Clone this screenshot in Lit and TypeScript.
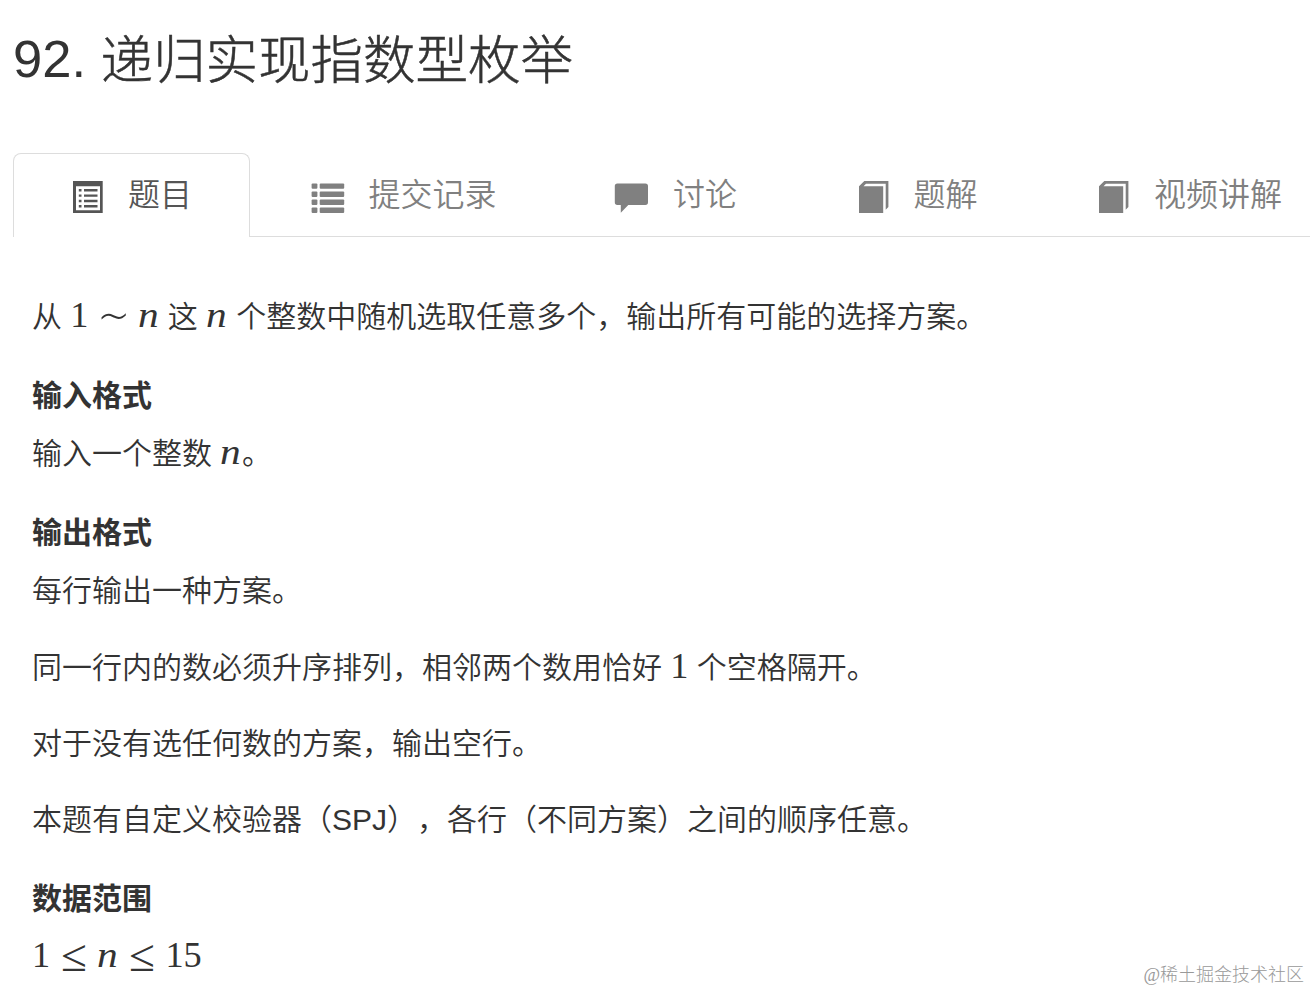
import { LitElement, html, css } from 'lit';
import { customElement } from 'lit/decorators.js';

const listAlt = html`
  <svg class="icon" viewBox="0 0 32 32">
    <path fill-rule="evenodd" d="M2 0H31.7V32H2ZM5 5.3V29.3H29V5.3Z"></path>
    <path d="M7.8 8h2.7v2.4H7.8zM13 8h13.5v2.4H13zM7.8 13.4h2.7v2.4H7.8zM13 13.4h13.5v2.4H13zM7.8 18.8h2.7v2.4H7.8zM13 18.8h13.5v2.4H13zM7.8 24.1h2.7v2.4H7.8zM13 24.1h13.5v2.4H13z"></path>
  </svg>
`;

const list = html`
  <svg class="icon" viewBox="0 0 32 32">
    <rect x="-0.4" y="2.5" width="5.8" height="5.3" rx="1"></rect>
    <rect x="7.7" y="2.5" width="24.5" height="5.3" rx="1"></rect>
    <rect x="-0.4" y="10.6" width="5.8" height="5.3" rx="1"></rect>
    <rect x="7.7" y="10.6" width="24.5" height="5.3" rx="1"></rect>
    <rect x="-0.4" y="18.6" width="5.8" height="5.3" rx="1"></rect>
    <rect x="7.7" y="18.6" width="24.5" height="5.3" rx="1"></rect>
    <rect x="-0.4" y="26.6" width="5.8" height="5.3" rx="1"></rect>
    <rect x="7.7" y="26.6" width="24.5" height="5.3" rx="1"></rect>
  </svg>
`;

const comment = html`
  <svg class="icon" viewBox="0 0 32 32">
    <path d="M1.4 2.5H29.4a2.6 2.6 0 0 1 2.6 2.6V21.3a2.6 2.6 0 0 1-2.6 2.6H12.3L4.8 31.8V23.9H1.4a2.6 2.6 0 0 1-2.6-2.6V5.1A2.6 2.6 0 0 1 1.4 2.5Z"></path>
  </svg>
`;

const book = html`
  <svg class="icon" viewBox="0 0 32 32">
    <path d="M2 5.3 7.3 0H31.4V26L28.7 28.8V2.7H9L6.5 5.3H26.2V32H2Z"></path>
  </svg>
`;

@customElement('app-root')
export class AppRoot extends LitElement {
  static styles = css`
    :host {
      display: block;
      width: 1310px;
      height: 991px;
      overflow: hidden;
      position: relative;
      background: #fff;
      color: #333;
      font-family: "Liberation Sans", "Noto Sans CJK SC", sans-serif;
      text-spacing-trim: space-all;
    }

    h1 {
      margin: 0;
      padding: 24px 0 0 13px;
      height: 153px;
      box-sizing: border-box;
      font-size: 52.5px;
      line-height: 70px;
      font-weight: 300;
      white-space: nowrap;
    }

    .zh {
      display: inline-block;
      transform: translateY(2px);
      -webkit-text-stroke: 0.5px #333;
    }

    .tabs {
      display: flex;
      gap: 3.5px;
      height: 84px;
      margin-left: 13px;
      border-bottom: 1px solid #ddd;
      box-sizing: border-box;
      font-size: 32px;
      font-weight: 350;
      color: #808080;
    }

    .tab {
      display: flex;
      flex: none;
      gap: 25px;
      height: 84px;
      padding: 27px 57px 0;
      box-sizing: border-box;
      border: 1px solid transparent;
      border-bottom: none;
      line-height: 28px;
      white-space: nowrap;
    }

    .active {
      border-color: #ddd;
      border-radius: 8px 8px 0 0;
      background: #fff;
      color: #555;
    }

    .icon {
      width: 32px;
      height: 32px;
      fill: currentColor;
      overflow: visible;
    }

    .content {
      padding: 58.4px 32px 0;
      font-size: 30px;
      font-weight: 350;
      line-height: 44px;
    }

    p {
      margin: 0 0 32.3px;
      height: 44px;
      white-space: nowrap;
    }

    h4 {
      margin: 34.3px 0 14.7px;
      height: 44px;
      font-size: 30px;
      font-weight: bold;
    }

    .math {
      font-family: "Liberation Serif", serif;
      font-size: 36.3px;
      font-weight: normal;
      line-height: 40px;
    }

    .math span {
      display: inline-block;
      text-align: center;
    }

    .math .var {
      width: 0.6em;
      font-style: italic;
      transform: translateX(-0.5px) scaleX(1.14);
    }

    .math .rel {
      width: 0.778em;
      margin: 0 0.255em;
      line-height: 30px;
    }

    .math .sim {
      margin: 0 0.29em;
      font-family: "DejaVu Sans", sans-serif;
      font-weight: 200;
    }

    .sim .sign {
      margin: 0 -0.2em;
      transform: translateY(2px) scale(1.4);
    }

    .le .sign {
      transform: translateY(1px) scale(1.3, 1.25);
    }

    .watermark {
      position: absolute;
      right: 6px;
      bottom: 3px;
      color: #999;
      font-family: "Liberation Serif", "Noto Sans CJK SC", serif;
      font-size: 18px;
      font-weight: 300;
      line-height: 26px;
    }
  `;

  render() {
    const n = html`<span class="math"><span class="var">n</span></span>`;
    const one = html`<span class="math">1</span>`;
    const sim = html`<span class="rel sim"><span class="sign">∼</span></span>`;
    const le = html`<span class="rel le"><span class="sign">≤</span></span>`;

    return html`
      <h1>92. <span class="zh">递归实现指数型枚举</span></h1>
      <div class="tabs">
        <div class="tab active">${listAlt}<span>题目</span></div>
        <div class="tab">${list}<span>提交记录</span></div>
        <div class="tab">${comment}<span>讨论</span></div>
        <div class="tab">${book}<span>题解</span></div>
        <div class="tab">${book}<span>视频讲解</span></div>
      </div>
      <div class="content">
        <p>从 <span class="math">1${sim}<span class="var">n</span></span> 这 ${n} 个整数中随机选取任意多个，输出所有可能的选择方案。</p>
        <h4>输入格式</h4>
        <p>输入一个整数 ${n}。</p>
        <h4>输出格式</h4>
        <p>每行输出一种方案。</p>
        <p>同一行内的数必须升序排列，相邻两个数用恰好 ${one} 个空格隔开。</p>
        <p>对于没有选任何数的方案，输出空行。</p>
        <p>本题有自定义校验器（SPJ），各行（不同方案）之间的顺序任意。</p>
        <h4>数据范围</h4>
        <p><span class="math">1${le}<span class="var">n</span>${le}15</span></p>
      </div>
      <div class="watermark">@稀土掘金技术社区</div>
    `;
  }
}
